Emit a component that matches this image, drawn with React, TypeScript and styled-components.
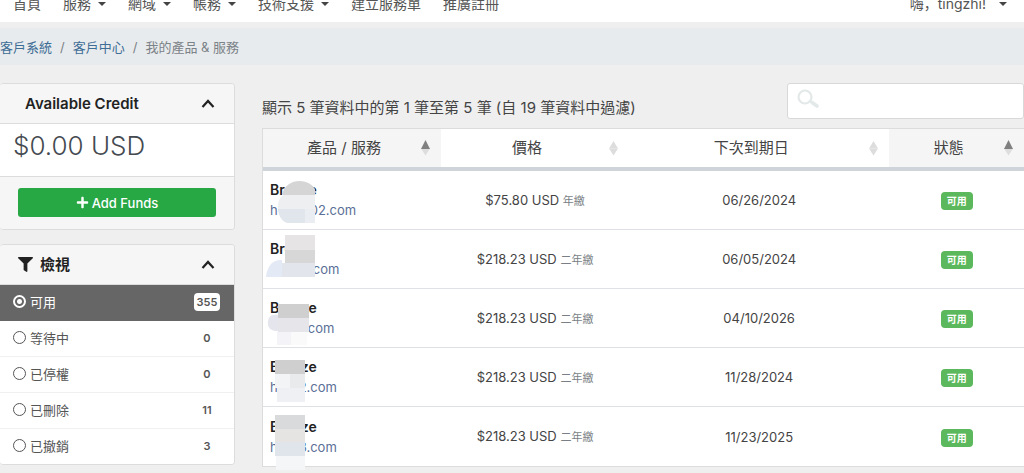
import React, { useState } from "react";
import styled, { createGlobalStyle } from "styled-components";
import { FaFilter, FaPlus } from "react-icons/fa";

const GlobalStyle = createGlobalStyle`
  *, *::before, *::after { box-sizing: border-box; }
  body {
    margin: 0;
    background: #efefef;
    color: #444;
    font-family: Inter, "Noto Sans CJK TC", sans-serif;
    font-size: 13px;
    line-height: 20px;
    overflow-x: hidden;
  }
  a { text-decoration: none; }
  h3 { margin: 0; }
`;

const Nav = styled.nav`
  display: flex;
  align-items: flex-end;
  gap: 22px;
  height: 22px;
  padding: 0 17px 8px 13px;
  overflow: hidden;
  background: #fff;
`;

const NavLink = styled.a<{ $gap?: number }>`
  display: flex;
  flex: none;
  align-items: center;
  gap: ${(p) => p.$gap ?? 7}px;
  height: 20px;
  color: #555;
  font-size: 14px;
`;

const UserSlot = styled.div`
  margin-left: auto;
  font-family: Inter, "Noto Sans CJK SC", sans-serif;
`;

const CaretMark = styled.span`
  border: 4px solid transparent;
  border-top-color: #444;
  border-bottom: 0;
`;

const Breadcrumb = styled.nav`
  display: flex;
  align-items: center;
  gap: 8px;
  height: 37px;
  margin-top: 6px;
  background: #e8ebed;
  color: #7b8288;
`;

const CrumbLink = styled.a`
  color: #3e6d96;
`;

const Layout = styled.div`
  display: grid;
  grid-template-columns: 235px minmax(0, 1fr);
  gap: 27px;
  align-items: start;
  padding: 18px 0 6px;
`;

const Sidebar = styled.aside`
  display: flex;
  flex-direction: column;
  gap: 14px;
`;

const Card = styled.section`
  overflow: hidden;
  border: 1px solid #dcdcdc;
  border-left: 0;
  border-radius: 4px;
  background: #fff;
`;

const CardHeader = styled.header<{ $indent: number }>`
  display: flex;
  align-items: center;
  justify-content: space-between;
  height: 40px;
  padding: 0 19px 0 ${(p) => p.$indent}px;
  border-bottom: 1px solid #dcdcdc;
  background: #f6f6f6;
  color: #222;
`;

const CardTitle = styled.h3`
  display: flex;
  align-items: center;
  gap: 7px;
  font-size: 15px;
  font-weight: 600;
`;

const IconButton = styled.button`
  display: flex;
  padding: 0;
  border: 0;
  background: none;
  color: #222;
`;

const Amount = styled.p`
  margin: 0;
  padding: 6px 13px 14px;
  font-size: 26px;
  font-weight: 300;
  line-height: 32px;
  color: #444a50;
`;

const CardFooter = styled.footer`
  padding: 11px 18px 12px;
  border-top: 1px solid #dcdcdc;
  background: #f6f6f6;
`;

const FundsButton = styled.button`
  display: flex;
  align-items: center;
  justify-content: center;
  gap: 3px;
  width: 100%;
  height: 29px;
  border: 0;
  border-radius: 3px;
  background: #28a745;
  color: #fff;
  font: 500 13px/20px Inter, sans-serif;
`;

const FilterRow = styled.label<{ $active: boolean }>`
  display: flex;
  align-items: center;
  gap: 4px;
  height: 36px;
  padding: 0 14px 2px 13px;
  border-bottom: 1px solid ${(p) => (p.$active ? "#666" : "#f0f0f0")};
  background: ${(p) => (p.$active ? "#666" : "#fff")};
  color: ${(p) => (p.$active ? "#fff" : "#555")};
  &:last-child {
    height: 35px;
    border-bottom: 0;
  }
`;

const Radio = styled.input`
  appearance: none;
  flex: none;
  width: 13px;
  height: 13px;
  margin: 0;
  border: 1px solid #555;
  border-radius: 50%;
  &:checked {
    border: 2px solid #fff;
    background: radial-gradient(circle, #fff 2px, transparent 3px);
  }
`;

const Count = styled.span<{ $active: boolean }>`
  min-width: 26px;
  margin-left: auto;
  border-radius: 4px;
  background: ${(p) => (p.$active ? "#fff" : "transparent")};
  color: #555;
  font-size: 11px;
  font-weight: 600;
  line-height: 18px;
  text-align: center;
`;

const Main = styled.main`
  min-width: 0;
`;

const Toolbar = styled.div`
  display: flex;
  align-items: flex-start;
  justify-content: space-between;
  height: 45px;
`;

const Info = styled.p`
  margin: 0;
  padding-top: 15px;
  font-size: 15px;
`;

const SearchBox = styled.label`
  display: flex;
  align-items: center;
  gap: 8px;
  width: 237px;
  height: 36px;
  padding: 0 9px 4px;
  border: 1px solid #d8d8d8;
  border-radius: 3px;
  background: #fff;
`;

const SearchInput = styled.input`
  flex: 1;
  min-width: 0;
  border: 0;
  outline: 0;
  background: none;
  font: inherit;
`;

const Table = styled.table`
  width: 100%;
  table-layout: fixed;
  border-collapse: separate;
  border-spacing: 0;
  border: 1px solid #dcdcdc;
  border-right: 0;
  background: #fff;
`;

const HeadCell = styled.th<{ $width: string; $sorted: boolean }>`
  width: ${(p) => p.$width};
  height: 42px;
  padding: 0 11px 0 4px;
  border-bottom: 4px solid #ced4da;
  background: ${(p) => (p.$sorted ? "#f5f5f5" : "#fff")};
  font-size: 15px;
  font-weight: 400;
`;

const HeadContent = styled.div`
  display: grid;
  grid-template-columns: 1fr 9px;
  align-items: center;
`;

const Cell = styled.td`
  position: relative;
  height: 59px;
  padding: 0;
  border-bottom: 1px solid #dee2e6;
  text-align: center;
  tbody tr:last-child & { border-bottom: 0; }
`;

const ProductCell = styled(Cell)`
  padding-left: 7px;
  text-align: left;
`;

const ProductName = styled.strong`
  display: block;
  color: #222;
  font-size: 14px;
  font-weight: 600;
`;

const Domain = styled.a`
  display: flex;
  color: #5a6f96;
`;

const Redacted = styled.span<{ $width: number }>`
  width: ${(p) => p.$width}px;
`;

const Mosaic = styled.svg`
  position: absolute;
  top: 0;
  left: 0;
  z-index: 1;
  overflow: visible;
`;

const Cycle = styled.small`
  font-size: 11px;
  color: #7a7f85;
`;

const Status = styled.span`
  display: inline-block;
  padding: 0 6px;
  border-radius: 4px;
  background: #5cb85c;
  color: #fff;
  font-size: 10px;
  font-weight: 700;
  line-height: 18px;
  vertical-align: middle;
`;

const Chevron = () => (
  <svg width="14" height="10" viewBox="0 0 14 10" fill="none" stroke="currentColor" strokeWidth="2.2">
    <path d="M1.5 8 L7 2 L12.5 8" />
  </svg>
);

const SortMark = ({ up }: { up: boolean }) => (
  <svg width="9" height="16" viewBox="0 0 9 16">
    <path d="M0 8.5 L4.5 15.5 L9 8.5 Z" fill="#ddd" />
    <path d={up ? "M0 9 L4.5 0 L9 9 Z" : "M0 8.5 L4.5 1 L9 8.5 Z"} fill={up ? "#808080" : "#ddd"} />
  </svg>
);

const SearchMark = () => (
  <svg width="23" height="20" viewBox="0 0 23 20" fill="none" stroke="#e3e8e8">
    <circle cx="8" cy="8" r="6.5" strokeWidth="2.2" />
    <path d="M12.5 12 L15 13.5" strokeWidth="2" />
    <path d="M15 13.5 L20 17" strokeWidth="3.6" strokeLinecap="round" />
  </svg>
);

type Block = [x: number, y: number, w: number, h: number, fill: string];
interface Product {
  name: string;
  head: string;
  hidden: number;
  tail: string;
  price: string;
  cycle: string;
  due: string;
  cover: React.ReactNode;
}

const blocks = (list: Block[]) =>
  list.map(([x, y, width, height, fill]) => (
    <rect key={`${x}-${y}`} x={x} y={y} width={width} height={height} fill={fill} />
  ));

const products: Product[] = [
  {
    name: "Breeze", head: "h", hidden: 32, tail: "02.com", price: "$75.80", cycle: "年繳", due: "06/26/2024",
    cover: (
      <>
        <path d="M19 24 C22 7 45 6 52 18 V24 Z" fill="#d5d5d6" />
        <path d="M20 24 H52 V38 H15 C14 31 17 27 20 24 Z" fill="#eeeff1" />
        <path d="M15 38 H42 V52 H24 C18 50 15 43 15 38 Z" fill="#e1e6ec" />
        {blocks([[42, 38, 10, 14, "#eaedf2"]])}
      </>
    ),
  },
  {
    name: "Breeze", head: "", hidden: 39, tail: ".com", price: "$218.23", cycle: "二年繳", due: "06/05/2024",
    cover: (
      <>
        {blocks([[22, 5, 30, 15, "#e6e4e4"], [22, 20, 30, 13, "#d7d7d8"], [19, 33, 33, 14, "#e2e5ec"]])}
        <path d="M44 0 H54 V29 H52 V5 H44 Z" fill="#fff" />
        <path d="M3 47 C4 34 12 29 19 30 V47 Z" fill="#e3e9f5" />
      </>
    ),
  },
  {
    name: "Breeze", head: "", hidden: 34, tail: ".com", price: "$218.23", cycle: "二年繳", due: "04/10/2026",
    cover: (
      <>
        {blocks([[15, 15, 31, 14, "#cfcfd0"], [15, 29, 31, 14, "#e5e5ea"], [14, 43, 14, 13, "#f4f4f8"], [28, 43, 16, 13, "#fafafa"]])}
        <path d="M5 36 C4 28 8 25 15 26 V42 C9 42 6 40 5 36 Z" fill="#e5e5ed" />
      </>
    ),
  },
  {
    name: "Breeze", head: "h", hidden: 21, tail: "2.com", price: "$218.23", cycle: "二年繳", due: "11/28/2024",
    cover: blocks([[12, 12, 30, 14, "#cfcfd0"], [12, 26, 15, 14, "#f3f4f6"], [27, 26, 15, 14, "#e8eaec"], [14, 40, 28, 14, "#eef0f3"]]),
  },
  {
    name: "Breeze", head: "h", hidden: 21, tail: "3.com", price: "$218.23", cycle: "二年繳", due: "11/23/2025",
    cover: blocks([[12, 8, 30, 14, "#d9dadb"], [12, 22, 30, 13, "#e5e4e3"], [12, 35, 30, 14, "#dfe5eb"], [13, 49, 29, 14, "#f4f6f8"]]),
  },
];

const menu = [
  { label: "首頁" },
  { label: "服務", more: true },
  { label: "網域", more: true },
  { label: "帳務", more: true },
  { label: "技術支援", more: true },
  { label: "建立服務單" },
  { label: "推廣註冊" },
];

const filters = [
  { label: "可用", count: 355 },
  { label: "等待中", count: 0 },
  { label: "已停權", count: 0 },
  { label: "已刪除", count: 11 },
  { label: "已撤銷", count: 3 },
];

const columns = [
  { label: "產品 / 服務", width: "23.4%", sorted: true },
  { label: "價格", width: "24.7%", sorted: false },
  { label: "下次到期日", width: "34.2%", sorted: false },
  { label: "狀態", width: "17.7%", sorted: true },
];

export default function App() {
  const [view, setView] = useState("可用");
  return (
    <>
      <GlobalStyle />
      <Nav>
        {menu.map((m) => (
          <NavLink key={m.label} href="#">
            {m.label}
            {m.more && <CaretMark />}
          </NavLink>
        ))}
        <UserSlot>
          <NavLink href="#" $gap={13} lang="zh-CN">
            嗨，tingzhi!
            <CaretMark />
          </NavLink>
        </UserSlot>
      </Nav>
      <Breadcrumb aria-label="breadcrumb">
        <CrumbLink href="#">客戶系統</CrumbLink>
        <span>/</span>
        <CrumbLink href="#">客戶中心</CrumbLink>
        <span>/</span>
        <span>我的產品 &amp; 服務</span>
      </Breadcrumb>
      <Layout>
        <Sidebar>
          <Card>
            <CardHeader $indent={25}>
              <CardTitle>Available Credit</CardTitle>
              <IconButton aria-label="Toggle credit"><Chevron /></IconButton>
            </CardHeader>
            <Amount>$0.00 USD</Amount>
            <CardFooter>
              <FundsButton><FaPlus />Add Funds</FundsButton>
            </CardFooter>
          </Card>
          <Card>
            <CardHeader $indent={18}>
              <CardTitle><FaFilter />檢視</CardTitle>
              <IconButton aria-label="Toggle filters"><Chevron /></IconButton>
            </CardHeader>
            <div>
              {filters.map((f) => (
                <FilterRow key={f.label} $active={view === f.label}>
                  <Radio type="radio" name="view" checked={view === f.label} onChange={() => setView(f.label)} />
                  {f.label}
                  <Count $active={view === f.label}>{f.count}</Count>
                </FilterRow>
              ))}
            </div>
          </Card>
        </Sidebar>
        <Main>
          <Toolbar>
            <Info>顯示 5 筆資料中的第 1 筆至第 5 筆 (自 19 筆資料中過濾)</Info>
            <SearchBox>
              <SearchMark />
              <SearchInput type="search" aria-label="Search" />
            </SearchBox>
          </Toolbar>
          <Table>
            <thead>
              <tr>
                {columns.map((c) => (
                  <HeadCell key={c.label} $width={c.width} $sorted={c.sorted}>
                    <HeadContent>
                      <span>{c.label}</span>
                      <SortMark up={c.sorted} />
                    </HeadContent>
                  </HeadCell>
                ))}
              </tr>
            </thead>
            <tbody>
              {products.map((p) => (
                <tr key={p.due}>
                  <ProductCell>
                    <ProductName>{p.name}</ProductName>
                    <Domain href="#">
                      {p.head}
                      <Redacted $width={p.hidden} />
                      {p.tail}
                    </Domain>
                    <Mosaic width="60" height="59" aria-hidden="true">{p.cover}</Mosaic>
                  </ProductCell>
                  <Cell>{p.price} USD <Cycle>{p.cycle}</Cycle></Cell>
                  <Cell>{p.due}</Cell>
                  <Cell><Status>可用</Status></Cell>
                </tr>
              ))}
            </tbody>
          </Table>
        </Main>
      </Layout>
    </>
  );
}
